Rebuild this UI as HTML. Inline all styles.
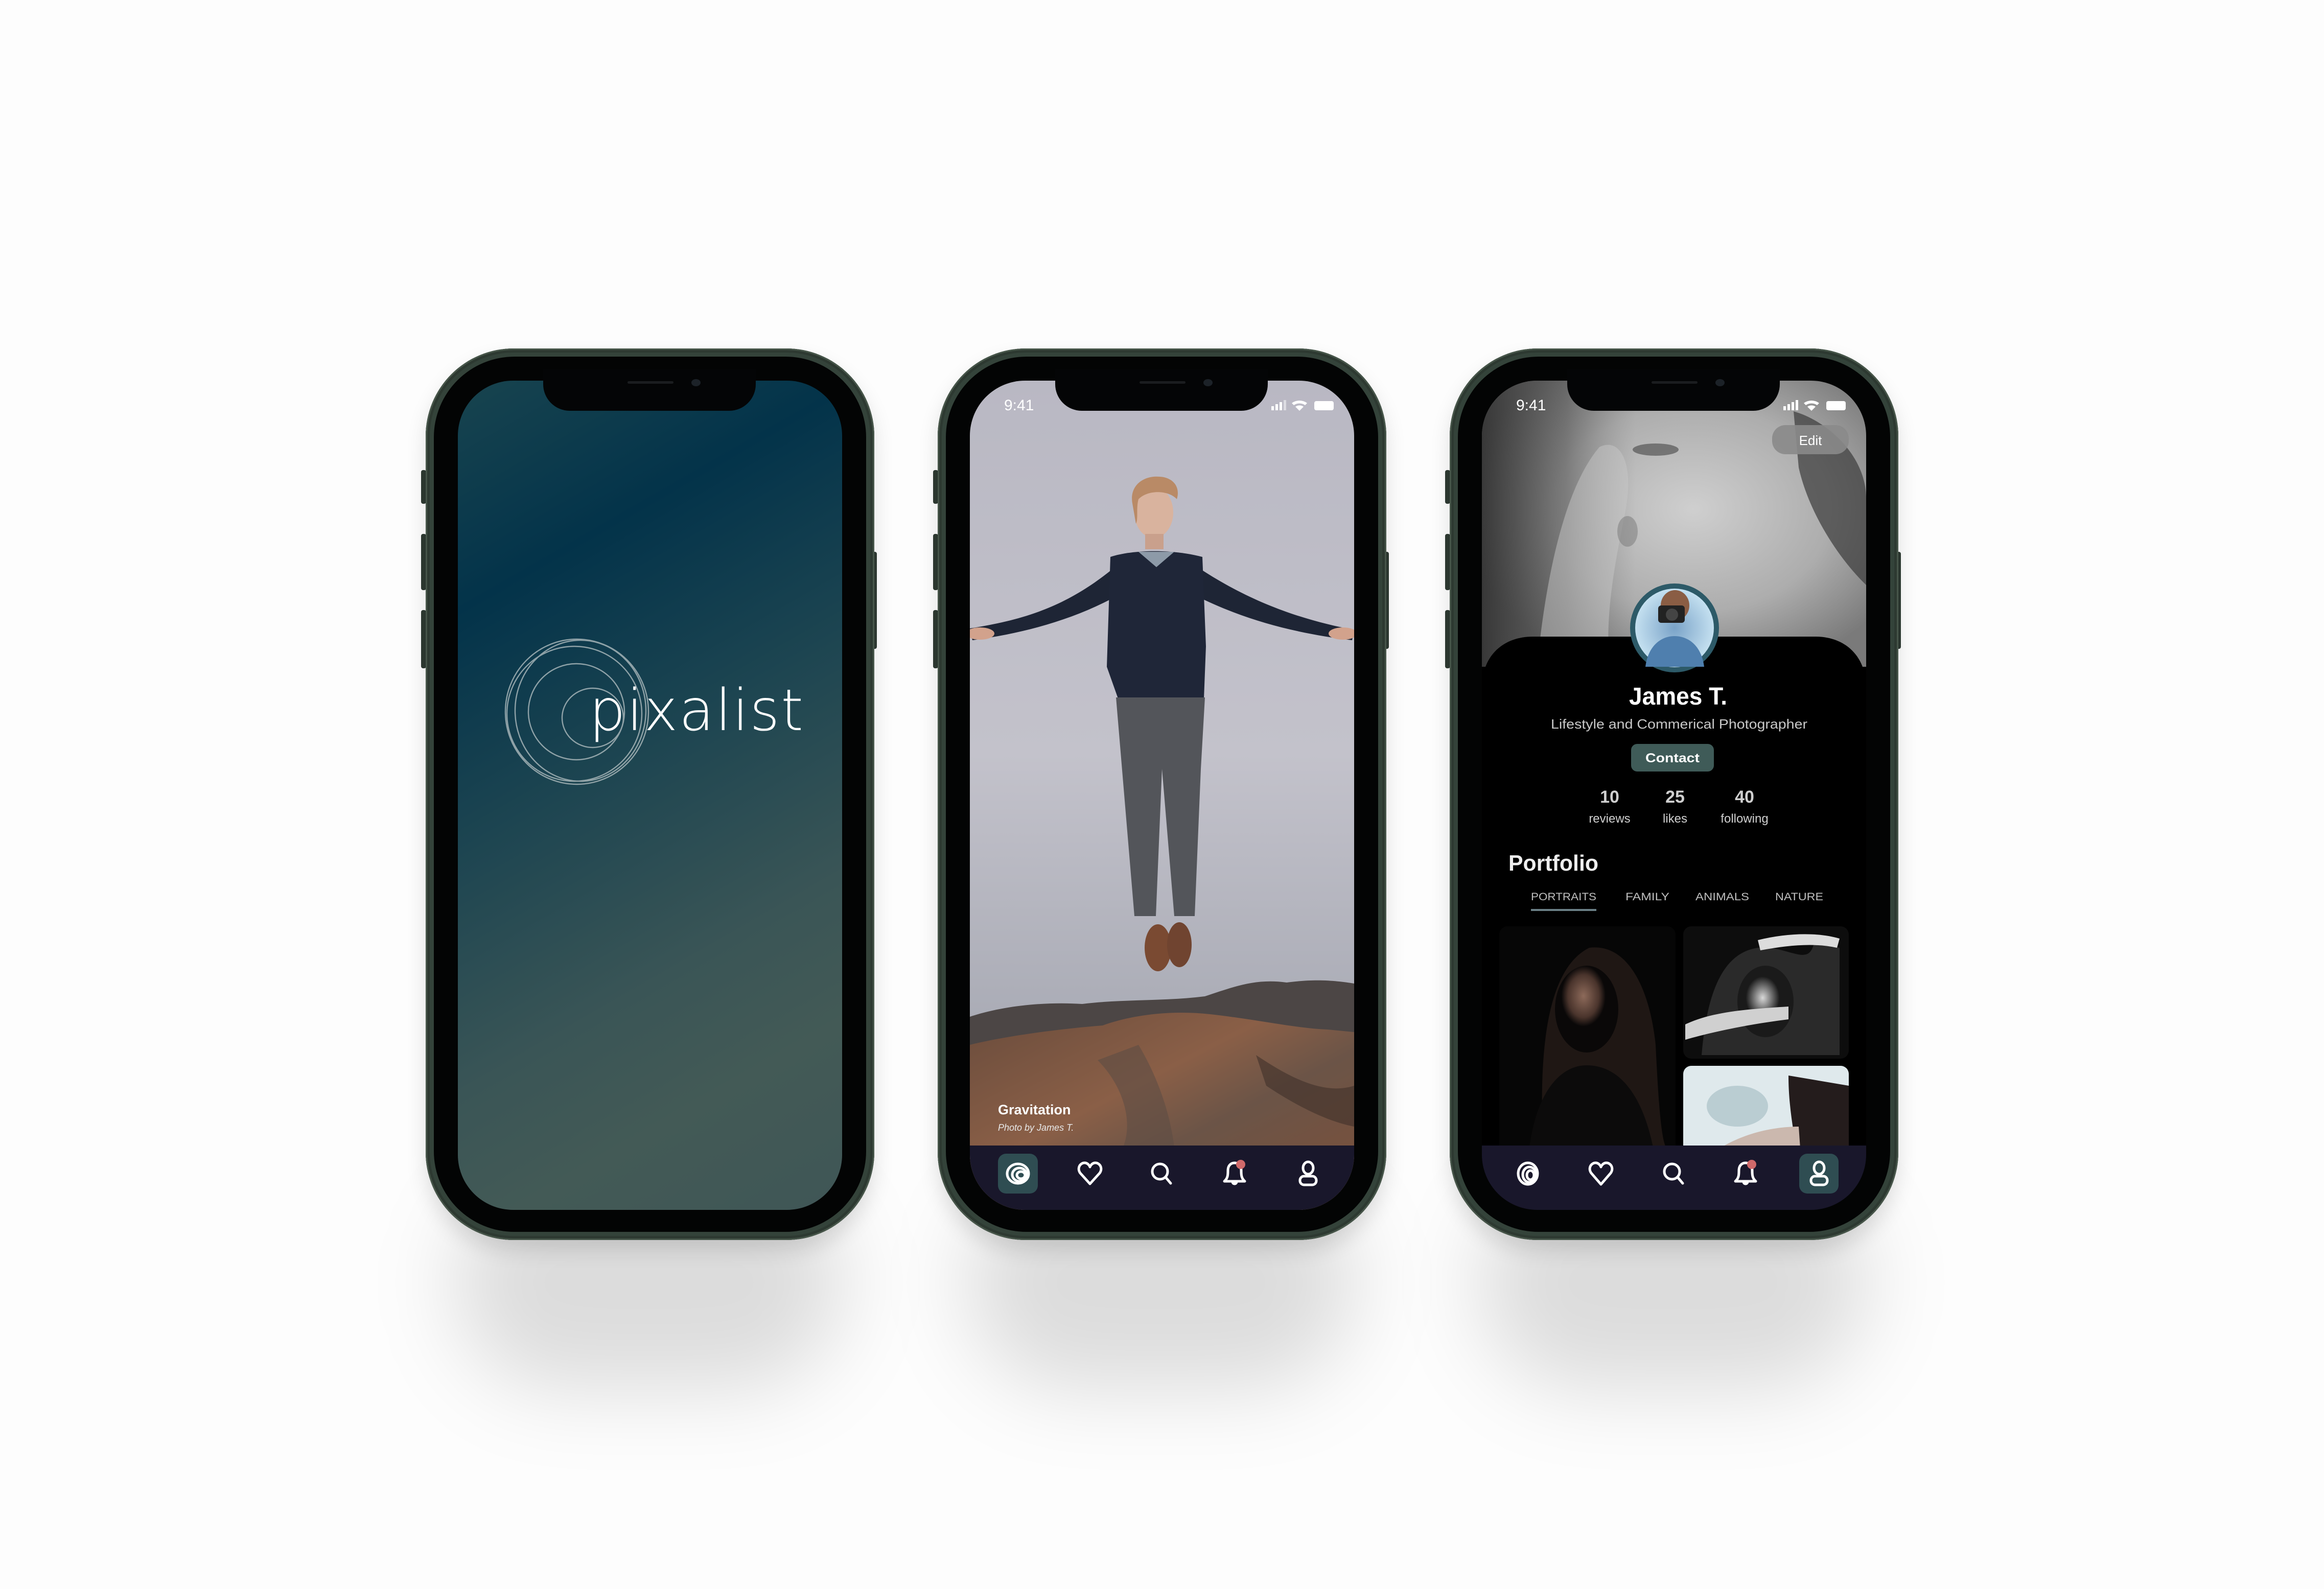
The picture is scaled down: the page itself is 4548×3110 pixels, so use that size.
<!DOCTYPE html>
<html><head><meta charset="utf-8">
<style>
html,body{margin:0;padding:0;}
body{width:4548px;height:3110px;background:#fdfdfd;position:relative;overflow:hidden;font-family:"Liberation Sans",sans-serif;}
.shadow{position:absolute;top:2300px;width:760px;height:420px;background:rgba(0,0,0,.13);filter:blur(80px);border-radius:220px;}
.phone{position:absolute;top:682px;width:878px;height:1745px;border-radius:172px;background:#34433a;box-shadow:inset 0 0 0 3px #465549,inset 0 0 0 8px #2d3931, 0 20px 40px rgba(0,0,0,.12);}
.bez{position:absolute;left:16px;top:16px;right:16px;bottom:16px;border-radius:158px;background:#030404;}
.scr{position:absolute;left:63px;top:63px;width:752px;height:1623px;border-radius:108px;overflow:hidden;}
.scr svg{display:block}
.notch{position:absolute;left:230px;top:40px;width:416px;height:82px;background:#040506;border-radius:0 0 52px 52px;}
.notch .sp{position:absolute;left:165px;top:24px;width:90px;height:5px;border-radius:3px;background:#1b1d1f;}
.notch .cam{position:absolute;left:290px;top:20px;width:18px;height:14px;border-radius:50%;background:#1c2228;}
.btn{position:absolute;width:10px;background:#2e3a32;border-radius:4px;}
</style></head><body>

<div class="shadow" style="left:890px"></div>
<div class="shadow" style="left:1892px"></div>
<div class="shadow" style="left:2894px"></div>

<!-- PHONE 1 -->
<div class="btn" style="left:824px;top:920px;height:66px"></div>
<div class="btn" style="left:824px;top:1045px;height:110px"></div>
<div class="btn" style="left:824px;top:1194px;height:114px"></div>
<div class="btn" style="left:1706px;top:1080px;height:190px"></div>
<div class="phone" style="left:833px">
 <div class="bez"></div>
 <div class="scr" style="background:linear-gradient(150deg,#18444f 0%,#03334a 22%,#1d4551 45%,#3a5556 68%,#435a56 82%,#3f5656 100%)">
  <svg width="752" height="1623" viewBox="0 0 752 1623">
   <g fill="none" stroke="#b9c4c6" stroke-width="2.4" opacity=".75">
    <ellipse cx="233" cy="648" rx="140" ry="142"/>
    <ellipse cx="228" cy="652" rx="132" ry="132"/>
    <ellipse cx="240" cy="646" rx="128" ry="138"/>
    <ellipse cx="232" cy="648" rx="94" ry="94"/>
    <ellipse cx="264" cy="660" rx="60" ry="58"/>
   </g>
   <text x="257" y="684" font-family="DejaVu Sans,Liberation Sans,sans-serif" font-size="112" font-weight="200" fill="#ffffff" textLength="419" lengthAdjust="spacing">pixalist</text>
  </svg>
 </div>
 <div class="notch"><div class="sp"></div><div class="cam"></div></div>
</div>

<!-- PHONE 2 -->
<div class="btn" style="left:1826px;top:920px;height:66px"></div>
<div class="btn" style="left:1826px;top:1045px;height:110px"></div>
<div class="btn" style="left:1826px;top:1194px;height:114px"></div>
<div class="btn" style="left:2708px;top:1080px;height:190px"></div>
<div class="phone" style="left:1835px">
 <div class="bez"></div>
 <div class="scr">
  <svg width="752" height="1623" viewBox="0 0 752 1623">
   <defs>
    <linearGradient id="sky" x1="0" y1="0" x2="0" y2="1">
     <stop offset="0" stop-color="#b9b8c3"/><stop offset=".45" stop-color="#c3c2cb"/><stop offset=".8" stop-color="#a8aab4"/><stop offset="1" stop-color="#9c9ea8"/>
    </linearGradient>
    <linearGradient id="rock" x1="0" y1="0" x2="1" y2="1">
     <stop offset="0" stop-color="#6a4c3c"/><stop offset=".4" stop-color="#8a5f47"/><stop offset=".6" stop-color="#6b5447"/><stop offset="1" stop-color="#7d5039"/>
    </linearGradient>
   </defs>
   <rect width="752" height="1623" fill="url(#sky)"/>
   <path d="M0,1245 C60,1225 140,1215 220,1220 C300,1210 380,1215 460,1205 C520,1185 560,1170 620,1178 C680,1170 720,1175 752,1180 L752,1300 L0,1300 Z" fill="#4c4645"/>
   <path d="M0,1300 C60,1285 160,1270 260,1262 C320,1240 400,1232 470,1240 C560,1250 640,1268 700,1270 L752,1275 L752,1623 L0,1623 Z" fill="url(#rock)"/>
   <path d="M250,1330 C300,1380 320,1450 300,1500 L400,1500 C390,1420 360,1350 330,1300 Z" fill="#5d4d45" opacity=".6"/>
   <path d="M560,1320 C620,1360 690,1400 752,1380 L752,1460 C700,1450 640,1420 580,1380 Z" fill="#3f302a" opacity=".6"/>
   <path d="M0,485 C90,470 180,450 280,368 L290,420 C200,470 100,495 5,508 Z" fill="#1e2535"/>
   <path d="M752,488 C660,470 560,440 450,368 L440,420 C540,470 640,495 748,508 Z" fill="#1e2535"/>
   <ellipse cx="20" cy="495" rx="28" ry="12" fill="#d2a28c"/>
   <ellipse cx="730" cy="495" rx="28" ry="12" fill="#d2a28c"/>
   <path d="M275,345 C320,330 400,330 455,345 L462,520 L458,622 L290,622 L268,560 Z" fill="#1f2638"/>
   <path d="M330,335 L365,365 L400,335 Z" fill="#8d9aa8"/>
   <path d="M286,620 L460,620 L452,760 L440,1048 L400,1048 L376,760 L364,1048 L322,1048 Z" fill="#53555a"/>
   <ellipse cx="368" cy="1110" rx="26" ry="46" fill="#7a4a32"/>
   <ellipse cx="410" cy="1104" rx="24" ry="44" fill="#704430"/>
   <ellipse cx="360" cy="258" rx="38" ry="50" fill="#d9b39e"/>
   <path d="M318,240 C312,205 340,185 372,188 C400,190 412,210 405,232 C390,215 350,212 330,232 C325,250 330,270 325,280 Z" fill="#b98a66"/>
   <rect x="343" y="300" width="36" height="30" fill="#c9a08c"/>
   <text x="55" y="1436" font-family="Liberation Sans,sans-serif" font-weight="700" font-size="27" fill="#fff">Gravitation</text>
   <text x="55" y="1468" font-family="Liberation Sans,sans-serif" font-style="italic" font-size="18" fill="#e8e8e8">Photo by James T.</text>
   <rect x="0" y="1497" width="752" height="126" fill="#19172b"/>
   <rect x="55" y="1513" width="78" height="78" rx="16" fill="#2f4d52"/>
   <g stroke="#fff" stroke-width="5" fill="none" stroke-linecap="round" stroke-linejoin="round">
    <g transform="translate(94,1552)"><ellipse rx="21" ry="19"/><ellipse cx="3" cy="2" rx="14" ry="13"/><ellipse cx="6" cy="3" rx="8" ry="7"/></g>
    <g transform="translate(235,1552)"><path d="M0,20 L-19,-1 C-26,-11 -19,-22 -9,-21 C-4,-20 -1,-16 0,-13 C1,-16 4,-20 9,-21 C19,-22 26,-11 19,-1 Z"/></g>
    <g transform="translate(376,1552)"><circle cx="-4" cy="-4" r="15"/><line x1="7" y1="7" x2="17" y2="19"/></g>
    <g transform="translate(518,1552)"><path d="M-20,15 C-13,9 -13,2 -13,-6 C-13,-16 -7,-21 0,-21 C7,-21 13,-16 13,-6 C13,2 13,9 20,15 Z"/><path d="M-4,16 A4,4 0 0 0 4,16"/></g>
    <g transform="translate(662,1552)"><ellipse cy="-11" rx="10" ry="12"/><rect x="-16" y="5" width="32" height="17" rx="8"/></g>
   </g>
   <circle cx="530" cy="1534" r="9" fill="#d0696a"/>
   <text x="67" y="58" font-family="Liberation Sans,sans-serif" font-size="30" fill="#fff">9:41</text>
   <g fill="#fff"><rect x="590" y="50" width="5" height="8"/><rect x="598" y="46" width="5" height="12"/><rect x="606" y="42" width="5" height="16"/><rect x="614" y="38" width="5" height="20" opacity=".5"/>
   <path d="M630,44 A25,25 0 0 1 660,44 L656,48 A19,19 0 0 0 634,48 Z"/><path d="M637,51 A14,14 0 0 1 653,51 L645,59 Z"/>
   <rect x="674" y="40" width="38" height="18" rx="4"/></g>
  </svg>
 </div>
 <div class="notch"><div class="sp"></div><div class="cam"></div></div>
</div>

<!-- PHONE 3 -->
<div class="btn" style="left:2828px;top:920px;height:66px"></div>
<div class="btn" style="left:2828px;top:1045px;height:110px"></div>
<div class="btn" style="left:2828px;top:1194px;height:114px"></div>
<div class="btn" style="left:3710px;top:1080px;height:190px"></div>
<div class="phone" style="left:2837px">
 <div class="bez"></div>
 <div class="scr" style="background:#000">
  <svg width="752" height="1623" viewBox="0 0 752 1623">
   <defs>
    <radialGradient id="face" cx=".55" cy=".45" r=".6">
     <stop offset="0" stop-color="#cfcfcf"/><stop offset=".6" stop-color="#adadad"/><stop offset="1" stop-color="#7a7a7a"/>
    </radialGradient>
    <linearGradient id="leftdark" x1="0" y1="0" x2="1" y2="0">
     <stop offset="0" stop-color="#2c2c2c" stop-opacity=".85"/><stop offset=".22" stop-color="#4a4a4a" stop-opacity=".5"/><stop offset=".4" stop-color="#777" stop-opacity="0"/>
    </linearGradient>
    <radialGradient id="av" cx=".5" cy=".5" r=".5"><stop offset="0" stop-color="#7aa3c8"/><stop offset="1" stop-color="#c4e0f0"/></radialGradient>
    <radialGradient id="pf" cx=".45" cy=".35" r=".35"><stop offset="0" stop-color="#8d6a5a"/><stop offset=".7" stop-color="#4a342c"/><stop offset="1" stop-color="#0a0808"/></radialGradient>
    <radialGradient id="wf" cx=".45" cy=".45" r=".3"><stop offset="0" stop-color="#d8d8d8"/><stop offset="1" stop-color="#1a1a1a"/></radialGradient>
   </defs>
   <rect width="752" height="560" fill="url(#face)"/>
   <rect width="752" height="560" fill="url(#leftdark)"/>
   <path d="M610,60 C680,80 752,150 752,230 L752,400 C700,350 640,260 620,170 Z" fill="#3a3a3a" opacity=".7"/>
   <path d="M110,540 C130,350 170,200 230,130 C270,110 300,160 280,260 C260,360 240,460 250,560 Z" fill="#c8c8c8" opacity=".5"/>
   <ellipse cx="340" cy="135" rx="45" ry="12" fill="#444" opacity=".6"/>
   <ellipse cx="285" cy="295" rx="20" ry="30" fill="#777" opacity=".5"/>
   <rect x="568" y="87" width="150" height="57" rx="26" fill="#8a8a8a" opacity=".9"/>
   <text x="643" y="126" text-anchor="middle" font-family="Liberation Sans,sans-serif" font-size="26" fill="#fff">Edit</text>
   <path d="M0,601 C0,540 40,501 100,501 L652,501 C712,501 752,540 752,601 L752,1623 L0,1623 Z" fill="#000"/>
   <circle cx="377" cy="484" r="87" fill="#2d5a68"/>
   <circle cx="377" cy="484" r="77" fill="url(#av)"/>
   <path d="M320,560 C325,520 350,500 377,500 C405,500 430,520 435,560 Z" fill="#4f7fae"/>
   <ellipse cx="378" cy="440" rx="28" ry="30" fill="#8a5d44"/>
   <rect x="345" y="440" width="52" height="34" rx="6" fill="#222"/>
   <circle cx="372" cy="458" r="12" fill="#444"/>
   <text x="384" y="634" text-anchor="middle" font-family="Liberation Sans,sans-serif" font-weight="700" font-size="48" fill="#fff" textLength="192" lengthAdjust="spacingAndGlyphs">James T.</text>
   <text x="386" y="681" text-anchor="middle" font-family="Liberation Sans,sans-serif" font-size="26" fill="#c8c8c8" textLength="502" lengthAdjust="spacingAndGlyphs">Lifestyle and Commerical Photographer</text>
   <rect x="292" y="711" width="162" height="54" rx="12" fill="#3f5b58"/>
   <text x="373" y="747" text-anchor="middle" font-family="Liberation Sans,sans-serif" font-weight="700" font-size="25" fill="#fff" textLength="106" lengthAdjust="spacingAndGlyphs">Contact</text>
   <g font-family="Liberation Sans,sans-serif" fill="#cfcfcf" text-anchor="middle">
    <text x="250" y="826" font-weight="700" font-size="34">10</text>
    <text x="378" y="826" font-weight="700" font-size="34">25</text>
    <text x="514" y="826" font-weight="700" font-size="34">40</text>
    <text x="250" y="865" font-size="24">reviews</text>
    <text x="378" y="865" font-size="24">likes</text>
    <text x="514" y="865" font-size="24">following</text>
   </g>
   <text x="52" y="959" font-family="Liberation Sans,sans-serif" font-weight="700" font-size="44" fill="#eee" textLength="176" lengthAdjust="spacingAndGlyphs">Portfolio</text>
   <g font-family="Liberation Sans,sans-serif" font-size="21" fill="#bfbfbf">
    <text x="96" y="1017" textLength="128" lengthAdjust="spacingAndGlyphs">PORTRAITS</text>
    <text x="281" y="1017" textLength="86" lengthAdjust="spacingAndGlyphs">FAMILY</text>
    <text x="418" y="1017" textLength="105" lengthAdjust="spacingAndGlyphs">ANIMALS</text>
    <text x="574" y="1017" textLength="94" lengthAdjust="spacingAndGlyphs">NATURE</text>
   </g>
   <rect x="96" y="1034" width="128" height="4" fill="#6a7f86"/>
   <rect x="34" y="1068" width="345" height="460" rx="16" fill="#060606"/>
   <path d="M120,1500 C110,1300 130,1150 210,1110 C290,1100 330,1200 340,1300 C345,1400 350,1480 360,1500 Z" fill="#1f1714"/>
   <ellipse cx="205" cy="1230" rx="62" ry="85" fill="url(#pf)"/>
   <path d="M90,1528 C100,1400 150,1340 205,1340 C270,1340 320,1400 340,1528 Z" fill="#0c0b0b"/>
   <rect x="394" y="1068" width="324" height="259" rx="16" fill="#0d0d0d"/>
   <path d="M430,1320 C440,1200 470,1120 540,1110 C600,1105 640,1150 650,1100 L700,1110 L700,1320 Z" fill="#2a2a2a"/>
   <ellipse cx="555" cy="1215" rx="55" ry="70" fill="url(#wf)"/>
   <path d="M398,1260 C450,1235 520,1230 600,1225 L600,1250 C520,1260 450,1275 398,1290 Z" fill="#d0d0d0"/>
   <path d="M540,1095 C600,1080 660,1080 700,1092 L695,1110 C650,1100 600,1105 545,1115 Z" fill="#dcdcdc"/>
   <rect x="394" y="1341" width="324" height="190" rx="16" fill="#dfe9ec"/>
   <ellipse cx="500" cy="1420" rx="60" ry="40" fill="#a9c0c8" opacity=".7"/>
   <path d="M600,1360 L718,1380 L718,1531 L620,1531 C610,1470 600,1420 600,1360 Z" fill="#241c1c"/>
   <path d="M430,1531 C480,1480 560,1460 620,1460 L625,1531 Z" fill="#cbb8ae"/>
   <rect x="0" y="1497" width="752" height="126" fill="#19172b"/>
   <rect x="621" y="1513" width="77" height="78" rx="16" fill="#2f4d52"/>
   <g stroke="#fff" stroke-width="5" fill="none" stroke-linecap="round" stroke-linejoin="round">
    <g transform="translate(90,1552)"><ellipse rx="19" ry="21"/><ellipse cx="3" cy="2" rx="13" ry="15"/><ellipse cx="5" cy="3" rx="7" ry="9"/></g>
    <g transform="translate(233,1552)"><path d="M0,21 L-19,-1 C-26,-11 -19,-22 -9,-21 C-4,-20 -1,-16 0,-13 C1,-16 4,-20 9,-21 C19,-22 26,-11 19,-1 Z"/></g>
    <g transform="translate(376,1552)"><circle cx="-4" cy="-4" r="15"/><line x1="7" y1="7" x2="17" y2="19"/></g>
    <g transform="translate(516,1552)"><path d="M-20,15 C-13,9 -13,2 -13,-6 C-13,-16 -7,-21 0,-21 C7,-21 13,-16 13,-6 C13,2 13,9 20,15 Z"/><path d="M-4,16 A4,4 0 0 0 4,16"/></g>
    <g transform="translate(660,1552)"><ellipse cy="-11" rx="10" ry="12"/><rect x="-16" y="5" width="32" height="17" rx="8"/></g>
   </g>
   <circle cx="528" cy="1534" r="9" fill="#d0696a"/>
   <text x="67" y="58" font-family="Liberation Sans,sans-serif" font-size="30" fill="#fff">9:41</text>
   <g fill="#fff"><rect x="590" y="50" width="5" height="8"/><rect x="598" y="46" width="5" height="12"/><rect x="606" y="42" width="5" height="16"/><rect x="614" y="38" width="5" height="20"/>
   <path d="M630,44 A25,25 0 0 1 660,44 L656,48 A19,19 0 0 0 634,48 Z"/><path d="M637,51 A14,14 0 0 1 653,51 L645,59 Z"/>
   <rect x="674" y="40" width="38" height="18" rx="4"/></g>
  </svg>
 </div>
 <div class="notch"><div class="sp"></div><div class="cam"></div></div>
</div>

</body></html>
